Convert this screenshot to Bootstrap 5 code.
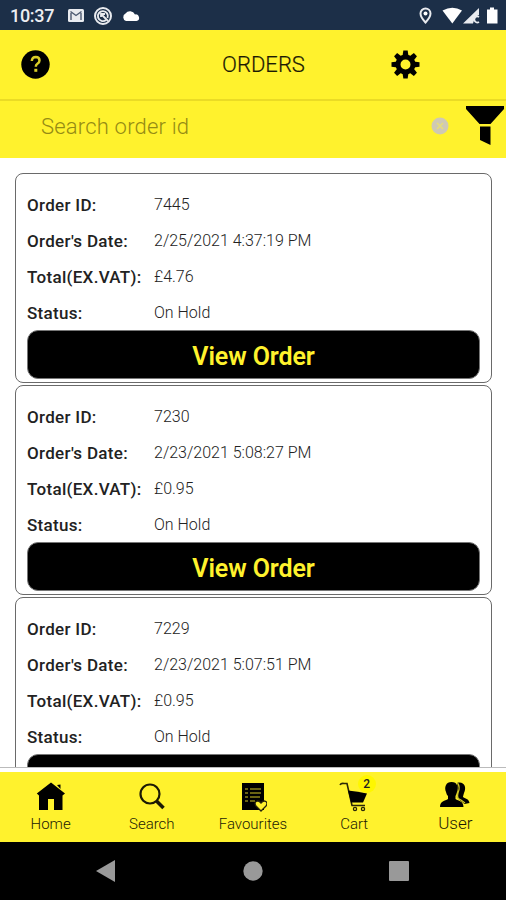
<!DOCTYPE html>
<html lang="en">
<head>
<meta charset="utf-8">
<meta name="viewport" content="width=device-width, initial-scale=1">
<title>Orders</title>
<link href="https://cdn.jsdelivr.net/npm/bootstrap@5.3.0/dist/css/bootstrap.min.css" rel="stylesheet">
<style>
body{font-family:Roboto,"Liberation Sans",sans-serif;color:#222}
.app{width:506px;height:900px;background:#fff}
svg{display:block;flex:none}
.statusbar{height:30px;background:#1c2f48;color:#fff;font-size:18px;font-weight:500;padding:1px 7px 0 10px}
.statusbar .clock{width:57px;color:#eceef1;letter-spacing:-.3px}
.brand{background:#fff22d}
.topbar{height:71px;border-bottom:2px solid #eadb25;padding:0 86px 0 21px}
.page-title{font-size:22px;font-weight:300;color:#1c1a04;line-height:1;padding-left:86px;-webkit-text-stroke:.2px}
.searchbar{height:57px;padding:0 1px 0 41px}
.searchbar input,.searchbar input:focus{background:transparent;font-size:22px;font-weight:300;letter-spacing:.2px;color:#5d5810;box-shadow:none;height:40px;margin-top:-7px}
.searchbar input::placeholder{color:#958b14;opacity:1}
.orders{height:610px;padding:15px 14px 0 15px;border-bottom:1px solid #bbb;gap:2px}
.order{height:210px;border:1.5px solid #6a6a6a;border-radius:8px;padding:13px 11px 0;flex:none}
.order dl{font-size:16px;line-height:36px}
.order dt{width:127px;font-size:17px;letter-spacing:.3px;font-weight:500;color:#222;white-space:nowrap}
.order dd{margin:0;color:#222;font-weight:300}
.btn-view{height:49px;margin-top:-1px;background:#000!important;color:#fff22d!important;font-size:25px;font-weight:600;letter-spacing:-.1px;border:1px solid #777;border-radius:11px;line-height:1;padding:3px 0 0}
.tabs{height:70px;margin-top:4px}
.tab{width:101.2px;font-size:15px;font-weight:300;line-height:18px;color:#1c1a04;text-decoration:none;padding-top:9px}
.tab svg{margin-bottom:1px}
.tab-user{font-size:17px}
.cart-count{top:3px;left:54px;width:18px;height:18px;border-radius:50%;background:#fff700;font-size:12px;font-weight:500;line-height:18px;color:#222}
.sysnav{height:58px;background:#000;padding:0 97px 0 96px}
</style>
</head>
<body>
<div class="app d-flex flex-column overflow-hidden">
  <div class="statusbar d-flex align-items-center">
    <span class="clock">10:37</span>
    <svg width="18" height="16" viewBox="0 0 18 16"><rect x="1" y="1" width="16" height="13" rx="1.5" fill="#e9ebef"/><path d="M3.500 3.500 9 7.500l5.500-4M4 5v7M14 5v7" fill="none" stroke="#4b5870" stroke-width="1.400"/></svg>
    <svg class="ms-2" width="20" height="20" viewBox="0 0 20 20" fill="none" stroke="#e9ebef"><circle cx="10" cy="10" r="8" stroke-width="2"/><path d="M13 14a5 5 0 1 1 1.500-2" stroke-width="1.900"/><path d="m8 8 7 7M8 11V8h4" stroke-width="1.800"/></svg>
    <svg class="ms-2" width="20" height="16" viewBox="0 0 20 16"><path d="M5 13a4 4 0 0 1-.5-7.400A5.500 5.500 0 0 1 14 6.500a3.300 3.300 0 0 1 1.500 6.500Z" fill="#fff"/></svg>
    <svg class="ms-auto" width="80" height="20" viewBox="0 0 80 20"><path d="M6.500 2.500a5 5 0 0 0-5 5c0 3.500 5 9 5 9s5-5.500 5-9a5 5 0 0 0-5-5Z" fill="none" stroke="#e9ebef" stroke-width="2"/><circle cx="6.500" cy="7.500" r="2" fill="#fff"/><path d="M23.500 4.500q10-5.500 19.500 0L33.300 17.500Z" fill="#fff"/><path d="M44 17.500 60 2v7l-4 2-2 6.500Z" fill="#e9ebef"/><path d="M60 11a3 3 0 1 0 0 5" fill="none" stroke="#e9ebef" stroke-width="1.800"/><path d="M68 3.500H71V1.500h4v2h3.500v14H68Z" fill="#fff"/></svg>
  </div>

  <header class="topbar brand d-flex align-items-center justify-content-between">
    <svg width="29" height="29" viewBox="0 0 29 29"><circle cx="14.500" cy="14.500" r="14.200"/><path d="M10.800 11q.3-4 4-4 3.700.1 3.700 3.500 0 2-2.100 3.300-1.600 1-1.600 3" fill="none" stroke="#d9cd27" stroke-width="2.500"/><path d="M13.300 18.800h3v3h-3z" fill="#d9cd27"/></svg>
    <h1 class="page-title m-0">ORDERS</h1>
    <svg width="29" height="29" viewBox="-14.500 -14.500 29 29"><path id="tooth" d="M-3-8-2.200-14H2.200L3-8Z"/><use href="#tooth" transform="rotate(45)"/><use href="#tooth" transform="rotate(90)"/><use href="#tooth" transform="rotate(135)"/><use href="#tooth" transform="rotate(180)"/><use href="#tooth" transform="rotate(225)"/><use href="#tooth" transform="rotate(270)"/><use href="#tooth" transform="rotate(315)"/><circle r="7.500" fill="none" stroke="#000" stroke-width="5"/></svg>
  </header>

  <div class="searchbar brand d-flex align-items-center">
    <input class="form-control border-0 p-0" type="text" placeholder="Search order id" aria-label="Search order id">
    <svg width="18" height="18" viewBox="0 0 18 18" style="margin-top:-8px"><circle cx="9" cy="9" r="8.500" fill="#cfc9b4"/><path d="m6 6 6 6m0-6-6 6" stroke="#e6dc7c" stroke-width="1.700"/></svg>
    <svg width="40" height="42" viewBox="0 0 40 42" style="margin:-10px 0 0 16px"><path d="M1 2h38v3L25.500 20h-11L1 5ZM15 22.500h10.500V41L15 36Z"/></svg>
  </div>

  <main class="orders d-flex flex-column overflow-hidden">
    <section class="order">
      <dl class="m-0">
        <div class="d-flex"><dt>Order ID:</dt><dd>7445</dd></div>
        <div class="d-flex"><dt>Order's Date:</dt><dd>2/25/2021 4:37:19 PM</dd></div>
        <div class="d-flex"><dt>Total(EX.VAT):</dt><dd>£4.76</dd></div>
        <div class="d-flex"><dt>Status:</dt><dd>On Hold</dd></div>
      </dl>
      <button class="btn btn-view w-100" type="button">View Order</button>
    </section>
    <section class="order">
      <dl class="m-0">
        <div class="d-flex"><dt>Order ID:</dt><dd>7230</dd></div>
        <div class="d-flex"><dt>Order's Date:</dt><dd>2/23/2021 5:08:27 PM</dd></div>
        <div class="d-flex"><dt>Total(EX.VAT):</dt><dd>£0.95</dd></div>
        <div class="d-flex"><dt>Status:</dt><dd>On Hold</dd></div>
      </dl>
      <button class="btn btn-view w-100" type="button">View Order</button>
    </section>
    <section class="order">
      <dl class="m-0">
        <div class="d-flex"><dt>Order ID:</dt><dd>7229</dd></div>
        <div class="d-flex"><dt>Order's Date:</dt><dd>2/23/2021 5:07:51 PM</dd></div>
        <div class="d-flex"><dt>Total(EX.VAT):</dt><dd>£0.95</dd></div>
        <div class="d-flex"><dt>Status:</dt><dd>On Hold</dd></div>
      </dl>
      <button class="btn btn-view w-100" type="button" aria-label="View Order"></button>
    </section>
  </main>

  <nav class="tabs brand d-flex">
    <a class="tab d-flex flex-column align-items-center" href="#"><svg width="30" height="33" viewBox="0 0 30 33"><path d="m15 1.500 14 11-2.500 2V29h-8.500V18h-6v11H3V14.500L.8 12.500Z"/><path d="m21 4 3.500-.5v4.500Z"/></svg>Home</a>
    <a class="tab d-flex flex-column align-items-center" href="#"><svg width="28" height="33" viewBox="0 0 28 33" fill="none" stroke="#1c1a04"><circle cx="12" cy="13" r="9.500" stroke-width="2.200"/><path d="m18.500 20 7 7" stroke-width="3.500"/></svg>Search</a>
    <a class="tab d-flex flex-column align-items-center" href="#"><svg width="28" height="33" viewBox="0 0 28 33"><path d="M3 2h22v27H3Z"/><path d="M6 8h3m2 0h11M6 12h3m2 0h11M6 16h3m2 0h10M6 20h3m2 0h5" stroke="#8c841a" stroke-width="1.500"/><path d="m22 30-5-5c-3-4 2-7 5-3 3-4 8-1 5 3Z" fill="#fff22d" stroke="#28250a" stroke-width="1.300"/></svg>Favourites</a>
    <a class="tab position-relative d-flex flex-column align-items-center" href="#"><svg width="30" height="33" viewBox="0 0 30 33"><path d="M1 4q1-2 4-1.500h3l5 22h13" fill="none" stroke="#2a2708" stroke-width="1.600"/><path d="M9 9.500q10 1 19 3l-4 9H12Z"/><circle cx="16" cy="28" r="1.600" fill="none" stroke="#2a2708" stroke-width="1.300"/><circle cx="24" cy="28" r="1.600" fill="none" stroke="#2a2708" stroke-width="1.300"/></svg>Cart<span class="cart-count position-absolute text-center">2</span></a>
    <a class="tab tab-user d-flex flex-column align-items-center" href="#"><svg width="30" height="32" viewBox="0 0 30 32"><path d="M17 2c7-2 10 4 7 10-.5 2-1 3-1 4 3 2 6 2 6.500 6l-5 1-6-5Z"/><path d="M11.500 1c6 0 7 5 5.500 10-.5 2-1 3-1.500 4v3c3 2 8 2 8 8H0c0-6 5-6 8-8v-3c-1-1-1.500-2-2-4C4 6 6 1 11.500 1Z"/><path d="M17.500 2q3 4 .5 10l-1 4q1 2 4 3l4 3" fill="none" stroke="#d3c725" stroke-width="1.300"/></svg>User</a>
  </nav>

  <footer class="sysnav d-flex align-items-center justify-content-between">
    <svg width="20" height="22" viewBox="0 0 20 22"><path d="M0 11 19 0v22Z" fill="#999"/></svg>
    <svg width="20" height="20" viewBox="0 0 20 20"><circle cx="10" cy="10" r="9.700" fill="#999"/></svg>
    <svg width="20" height="20" viewBox="0 0 20 20"><rect width="20" height="20" rx="1" fill="#999"/></svg>
  </footer>
</div>
<script src="https://cdn.jsdelivr.net/npm/bootstrap@5.3.0/dist/js/bootstrap.bundle.min.js"></script>
</body>
</html>
